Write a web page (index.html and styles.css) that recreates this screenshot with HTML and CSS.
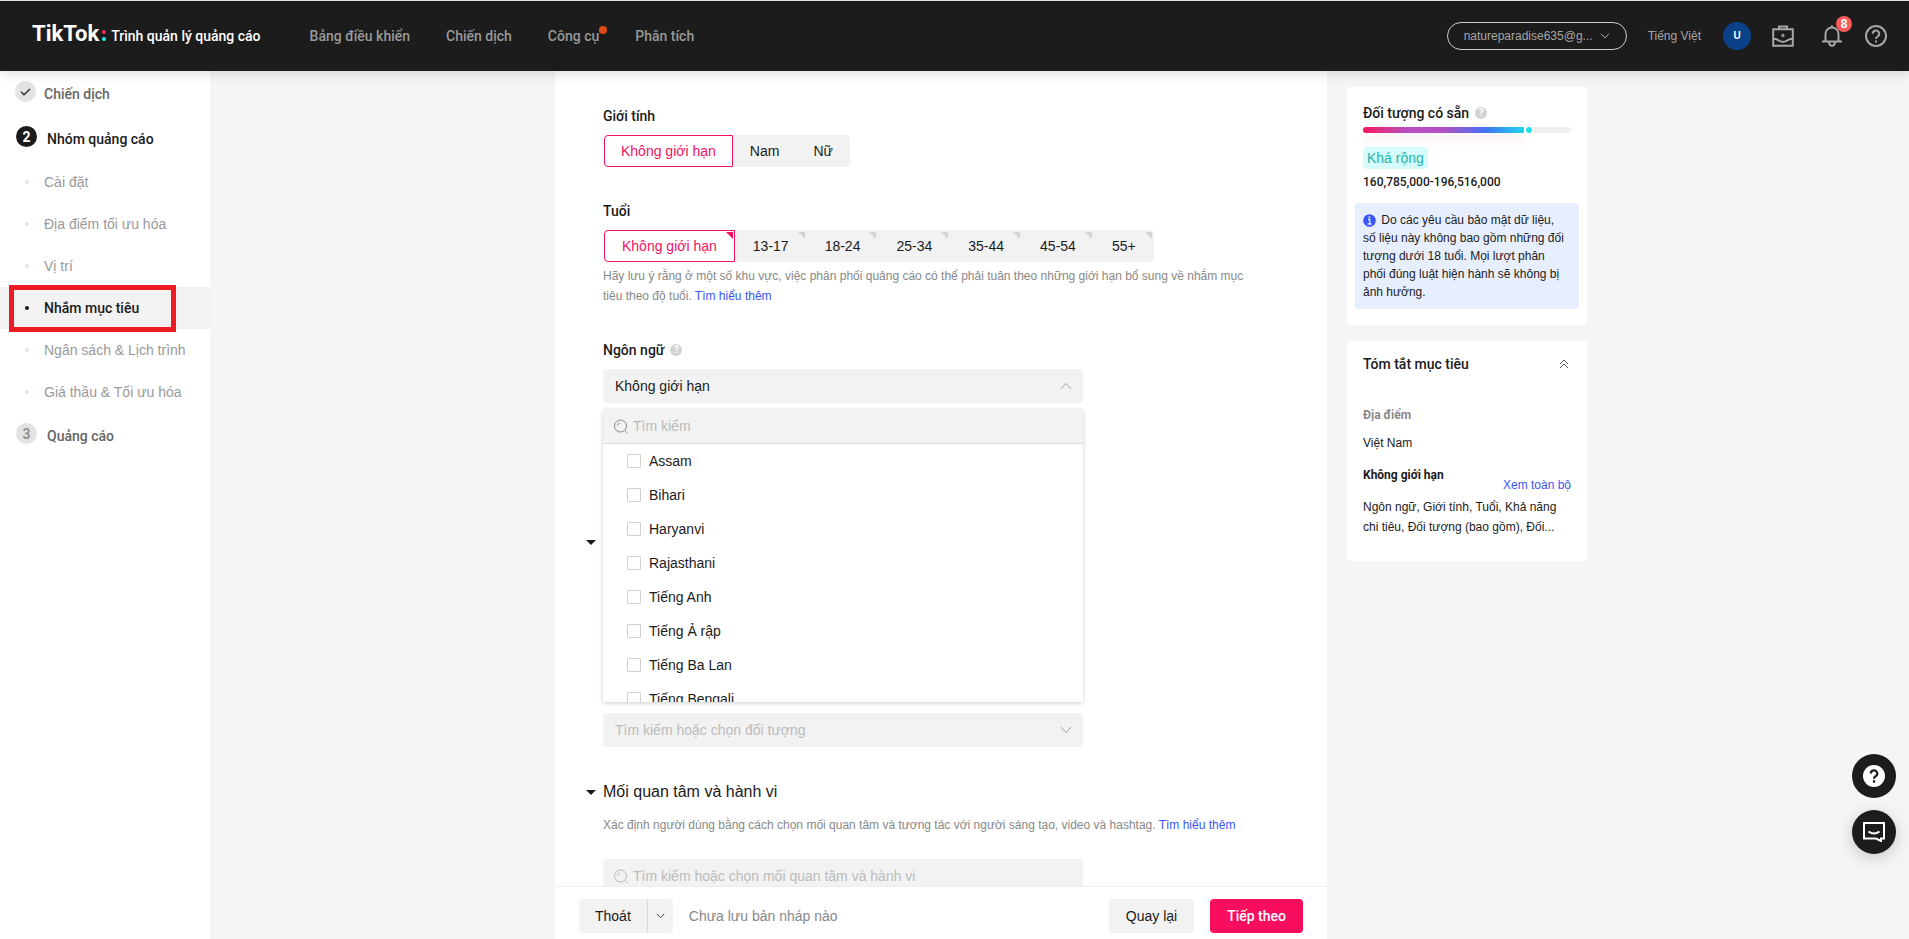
FILE: index.html
```html
<!DOCTYPE html>
<html lang="vi">
<head>
<meta charset="utf-8">
<title>Trình quản lý quảng cáo</title>
<link rel="stylesheet" href="styles.css">
</head>
<body>
<div class="app">
  <header class="topbar">
    <div class="brand">
      <span class="brand-name">TikTok</span>
      <span class="brand-colon"><i class="dot-red"></i><i class="dot-cyan"></i></span>
      <span class="brand-product">Trình quản lý quảng cáo</span>
    </div>
    <nav class="nav">
      <a href="#">Bảng điều khiển</a>
      <a href="#">Chiến dịch</a>
      <a href="#" class="has-dot">Công cụ</a>
      <a href="#">Phân tích</a>
    </nav>
    <div class="tools">
      <button class="account" type="button">natureparadise635@g...
        <svg width="10" height="6" viewBox="0 0 10 6"><path d="M1 .8 5 5 9 .8" fill="none" stroke="currentColor"/></svg>
      </button>
      <button class="lang" type="button">Tiếng Việt</button>
      <span class="avatar">U</span>
      <button class="tool tool-case" type="button" aria-label="Business Center">
        <svg width="22" height="22" viewBox="0 0 22 22" fill="none" stroke="currentColor" stroke-width="2"><path d="M7 4V1.500h8V4M1.200 4.200h19.600v16.600H1.200zM1.200 12.600 8 16.200q3 1.400 6 0l6.800-3.600"/><circle cx="11" cy="10.400" r=".6"/></svg>
      </button>
      <button class="tool tool-bell" type="button" aria-label="Thông báo">
        <svg width="22" height="22" viewBox="0 0 22 22" fill="none" stroke="currentColor" stroke-width="2"><path d="M4.500 16.500V9a6.500 6.500 0 0 1 13 0v7.500M1 16.600h20M11 .2V3M7.800 17q.4 3.800 3.200 3.800t3.200-3.800"/></svg>
        <span class="badge">8</span>
      </button>
      <button class="tool" type="button" aria-label="Trợ giúp">
        <svg width="22" height="22" viewBox="0 0 22 22" fill="none" stroke="currentColor" stroke-width="2"><circle cx="11" cy="11" r="10"/><path d="M7.800 8.800a3.200 3.200 0 1 1 4.800 2.700Q11 12.400 11 14"/><path d="M11 15.400v2"/></svg>
      </button>
    </div>
  </header>

  <div class="workspace">
    <aside class="sidebar">
      <a href="#" class="step"><span class="step-icon"><svg width="11" height="8" viewBox="0 0 11 8"><path d="m1 3.800 3 3L10 1" fill="none" stroke="#333" stroke-width="1.500"/></svg></span><span class="step-text">Chiến dịch</span></a>
      <a href="#" class="step step-numbered step-current"><span class="step-icon">2</span><span class="step-text">Nhóm quảng cáo</span></a>
      <ul class="substeps">
        <li><a href="#">Cài đặt</a></li>
        <li><a href="#">Địa điểm tối ưu hóa</a></li>
        <li><a href="#">Vị trí</a></li>
        <li class="active"><a href="#">Nhắm mục tiêu</a></li>
        <li><a href="#">Ngân sách &amp; Lịch trình</a></li>
        <li><a href="#">Giá thầu &amp; Tối ưu hóa</a></li>
      </ul>
      <a href="#" class="step step-numbered"><span class="step-icon">3</span><span class="step-text">Quảng cáo</span></a>
    </aside>

    <div class="content">
      <main class="panel">
        <div class="form">
          <fieldset class="field">
            <legend class="label">Giới tính</legend>
            <div class="segments">
              <label><input type="radio" name="gender" checked><span>Không giới hạn</span></label>
              <label><input type="radio" name="gender"><span>Nam</span></label>
              <label><input type="radio" name="gender"><span>Nữ</span></label>
            </div>
          </fieldset>
          <fieldset class="field">
            <legend class="label">Tuổi</legend>
            <div class="segments segments-corner">
              <label><input type="radio" name="age" checked><span>Không giới hạn</span></label>
              <label><input type="radio" name="age"><span>13-17</span></label>
              <label><input type="radio" name="age"><span>18-24</span></label>
              <label><input type="radio" name="age"><span>25-34</span></label>
              <label><input type="radio" name="age"><span>35-44</span></label>
              <label><input type="radio" name="age"><span>45-54</span></label>
              <label><input type="radio" name="age"><span>55+</span></label>
            </div>
            <p class="note">Hãy lưu ý rằng ở một số khu vực, việc phân phối quảng cáo có thể phải tuân theo những giới hạn bổ sung về nhắm mục tiêu theo độ tuổi. <a href="#">Tìm hiểu thêm</a></p>
          </fieldset>
          <div class="field">
            <label class="label" for="language">Ngôn ngữ <span class="hint">?</span></label>
            <div class="picker">
              <select id="language"><option>Không giới hạn</option></select>
              <svg class="arrow" width="12" height="8" viewBox="0 0 12 8"><path d="M1 6.800 6 1.500l5 5.300" fill="none" stroke="#999"/></svg>
              <div class="menu">
                <div class="search">
                  <svg width="14" height="15" viewBox="0 0 14 15" fill="none" stroke="#888"><circle cx="6.500" cy="7" r="6"/><path d="M10.800 11.200 13.500 14.300M3.500 6.500a3.500 3.500 0 0 1 2.500-2.600"/></svg>
                  <input type="text" placeholder="Tìm kiếm" aria-label="Tìm kiếm">
                </div>
                <div class="options">
                  <label><input type="checkbox">Assam</label>
                  <label><input type="checkbox">Bihari</label>
                  <label><input type="checkbox">Haryanvi</label>
                  <label><input type="checkbox">Rajasthani</label>
                  <label><input type="checkbox">Tiếng Anh</label>
                  <label><input type="checkbox">Tiếng Ả rập</label>
                  <label><input type="checkbox">Tiếng Ba Lan</label>
                  <label><input type="checkbox">Tiếng Bengali</label>
                </div>
              </div>
            </div>
          </div>
          <section class="group group-audience">
            <button class="toggle" type="button" aria-label="Thu gọn"></button>
            <div class="picker">
              <select class="empty" aria-label="Đối tượng"><option>Tìm kiếm hoặc chọn đối tượng</option></select>
              <svg class="arrow" width="12" height="8" viewBox="0 0 12 8"><path d="M1 1.200 6 6.500l5-5.300" fill="none" stroke="#999"/></svg>
            </div>
          </section>
          <section class="group">
            <button class="toggle" type="button">Mối quan tâm và hành vi</button>
            <p class="note">Xác định người dùng bằng cách chọn mối quan tâm và tương tác với người sáng tạo, video và hashtag. <a href="#">Tìm hiểu thêm</a></p>
            <div class="search search-field">
              <svg width="14" height="15" viewBox="0 0 14 15" fill="none" stroke="#bbb"><circle cx="6.500" cy="7" r="6"/><path d="M10.800 11.200 13.500 14.300M3.500 6.500a3.500 3.500 0 0 1 2.500-2.600"/></svg>
              <input type="text" placeholder="Tìm kiếm hoặc chọn mối quan tâm và hành vi" aria-label="Mối quan tâm và hành vi">
            </div>
          </section>
        </div>
        <footer class="actions">
          <div class="split">
            <button type="button">Thoát</button>
            <button type="button" class="split-more" aria-label="Thêm"><svg width="9" height="6" viewBox="0 0 9 6"><path d="m.8.800 3.700 4 3.700-4" fill="none" stroke="#444"/></svg></button>
          </div>
          <span class="status">Chưa lưu bản nháp nào</span>
          <button type="button" class="btn">Quay lại</button>
          <button type="button" class="btn btn-primary">Tiếp theo</button>
        </footer>
      </main>

      <aside class="insights">
        <section class="card card-audience">
          <h2 class="card-title">Đối tượng có sẵn <span class="hint">?</span></h2>
          <div class="meter"><div class="meter-fill"></div><i class="meter-knob"></i><div class="meter-rest"></div></div>
          <span class="tag">Khá rộng</span>
          <div class="range">160,785,000-196,516,000</div>
          <p class="info"><svg width="13" height="13" viewBox="0 0 13 13"><circle cx="6.500" cy="6.500" r="6.300" fill="#3a56f6"/><path d="M5 5.500h1.800V10M4.600 10h4" fill="none" stroke="#dfe6ff" stroke-width="1.300"/><circle cx="6.400" cy="3.300" r="1" fill="#dfe6ff"/></svg> Do các yêu cầu bảo mật dữ liệu, số&nbsp;liệu này không bao gồm những đối tượng dưới 18 tuổi. Mọi lượt phân phối&nbsp;đúng luật hiện hành sẽ không bị ảnh hưởng.</p>
        </section>
        <section class="card card-summary">
          <div class="card-head">
            <h2 class="card-title">Tóm tắt mục tiêu</h2>
            <button type="button" class="fold" aria-label="Thu gọn"><svg width="10" height="10" viewBox="0 0 10 10"><path d="m1 5 4-4 4 4M1 9l4-4 4 4" fill="none" stroke="#555"/></svg></button>
          </div>
          <h3 class="muted">Địa điểm</h3>
          <p class="place">Việt Nam</p>
          <h3>Không giới hạn</h3>
          <a href="#" class="see-all">Xem toàn bộ</a>
          <p class="list">Ngôn ngữ, Giới tính, Tuổi, Khả năng chi tiêu, Đối tượng (bao gồm), Đối...</p>
        </section>
      </aside>
    </div>
  </div>

  <div class="floating">
    <button type="button" aria-label="Trợ giúp"><svg width="22" height="22" viewBox="0 0 22 22"><circle cx="11" cy="11" r="11" fill="#fff"/><path d="M7.800 8.600a3.200 3.200 0 1 1 4.800 2.700Q11 12.300 11 13.800M11 15.300v2.400" fill="none" stroke="#1c1c1c" stroke-width="2.200"/></svg></button>
    <button type="button" class="chat" aria-label="Trò chuyện"><svg width="22" height="20" viewBox="0 0 22 20" fill="none" stroke="#fff" stroke-width="2"><path d="M1 1h20v15.500h-3V19l-5-2.500H1z"/><path d="M5.500 9.500q5.500 4 11 0"/></svg></button>
  </div>
  <div class="highlight"></div>
</div>
</body>
</html>
```

FILE: styles.css
```css
* { box-sizing: border-box; }

body {
  margin: 0;
  font: 14px/20px "Liberation Sans", Arial, sans-serif;
  color: #1b1b1b;
  background: #f5f5f5;
}

button, input, select { font: inherit; color: inherit; }
button { border: 0; padding: 0; background: none; cursor: pointer; }
a { color: #3955f6; text-decoration: none; }
h2, h3, p, ul, fieldset { margin: 0; padding: 0; border: 0; }
ul { list-style: none; }
svg { flex: none; }

/* Medium and bold text */
.brand, .nav, .step, .label, .range, .btn-primary, .card h2, .card h3, .substeps .active {
  font-family: Roboto, "Liberation Sans", sans-serif;
}

.app {
  position: relative;
  display: flex;
  flex-direction: column;
  height: 100vh;
  overflow: hidden;
}

/* Top bar */
.topbar {
  position: relative;
  z-index: 2;
  flex: none;
  display: flex;
  align-items: center;
  height: 71px;
  padding: 0 22px 0 32px;
  background: #1c1c1c;
  border-top: 1px solid #dde3e1;
  box-shadow: 0 2px 12px rgba(0, 0, 0, .15);
}
.brand { display: flex; align-items: center; color: #fff; font-weight: 500; }
.brand-name { font-size: 22px; font-weight: 700; line-height: 26px; padding-bottom: 4px; }
.brand-colon { display: flex; flex-direction: column; gap: 3px; padding: 0 5px 2px 3px; }
.brand-colon i { width: 4px; height: 4px; border-radius: 50%; }
.dot-red { background: #fe2c55; }
.dot-cyan { background: #25f4ee; }
.nav { display: flex; gap: 36px; margin-left: 49px; }
.nav a { position: relative; color: #999; font-weight: 500; }
.has-dot::after {
  content: "";
  position: absolute;
  top: 0;
  right: -8px;
  width: 8px;
  height: 8px;
  border-radius: 50%;
  background: #dd4a14;
}
.tools { display: flex; align-items: center; margin-left: auto; color: #a6a6a6; font-size: 12px; }
.account {
  display: flex;
  align-items: center;
  justify-content: space-between;
  width: 180px;
  height: 28px;
  padding: 0 16px;
  border: 1px solid #ccc;
  border-radius: 14px;
}
.lang { margin-left: 21px; }
.avatar {
  width: 28px;
  margin-left: 22px;
  border-radius: 50%;
  background: #0b4186;
  color: #fff;
  font-size: 10px;
  font-weight: 700;
  line-height: 28px;
  text-align: center;
}
.tool { position: relative; display: flex; }
.tool-case { margin-left: 21px; }
.tool-bell { margin: 0 22px 0 27px; }
.badge {
  position: absolute;
  top: -9px;
  right: -9px;
  width: 16px;
  border-radius: 8px;
  background: #fa5c5c;
  color: #fff;
  font-weight: 700;
  line-height: 16px;
  text-align: center;
}

/* Body */
.workspace { flex: 1; display: flex; min-height: 0; }

.sidebar { flex: none; width: 210px; padding-top: 10px; background: #fff; }
.step { display: flex; gap: 8px; padding-left: 15px; color: #666; font-weight: 500; }
.step-numbered { gap: 10px; padding-left: 16px; }
.step-icon {
  display: flex;
  align-items: center;
  justify-content: center;
  width: 21px;
  height: 21px;
  border-radius: 50%;
  background: #e3e3e3;
  color: #888;
}
.step-text { padding-top: 3px; }
.step-current { margin-top: 22px; color: #1b1b1b; }
.step-current .step-icon { background: #1b1b1b; color: #fff; font-weight: 700; }
.substeps { padding: 12px 0 10px; }
.substeps a {
  display: flex;
  align-items: center;
  gap: 15px;
  height: 42px;
  padding-left: 25px;
  color: #999;
}
.substeps a::before { content: ""; width: 4px; height: 4px; border-radius: 50%; background: #e5e5e5; }
.substeps .active { background: #f2f2f2; }
.substeps .active a { color: #1b1b1b; font-weight: 500; }
.substeps .active a::before { background: #1b1b1b; }

.highlight {
  position: absolute;
  z-index: 3;
  top: 285px;
  left: 9px;
  width: 167px;
  height: 47px;
  border: 5px solid #ed1c24;
  pointer-events: none;
}

.content { flex: 1; display: flex; justify-content: center; gap: 20px; padding-left: 23px; min-width: 0; }

/* Form */
.panel { flex: 0 1 772px; display: flex; flex-direction: column; background: #fff; min-width: 0; }
.form { flex: 1; min-height: 0; padding: 35px 48px 0; overflow: hidden; }
.field { margin-bottom: 34px; min-width: 0; }
.label { display: flex; align-items: center; gap: 6px; padding: 0; margin-bottom: 9px; font-weight: 500; }
.hint {
  width: 12px;
  height: 12px;
  border-radius: 50%;
  background: #d3d3d3;
  color: #fff;
  font-size: 10px;
  font-weight: 700;
  line-height: 12px;
  text-align: center;
}
.segments { display: inline-flex; margin-left: 1px; vertical-align: top; border-radius: 4px; background: #f2f2f2; }
.segments label { position: relative; }
.segments input { position: absolute; opacity: 0; margin: 0; }
.segments span { display: block; padding: 5px 16px; border: 1px solid transparent; }
.segments input:checked + span {
  border-color: #f5125f;
  border-radius: 4px 0 0 4px;
  background: #fff;
  color: #f5125f;
}
.segments-corner span { padding: 5px 17px; }
.segments-corner label::after {
  content: "";
  position: absolute;
  top: 2px;
  right: 2px;
  border-top: 7px solid #d3d3d3;
  border-left: 7px solid transparent;
}
.segments-corner label:first-child::after { border-top-color: #f5125f; }
.note { max-width: 660px; margin-top: 4px; color: #888; font-size: 12px; }

.picker { position: relative; width: 480px; max-width: 100%; }
select {
  display: block;
  width: 100%;
  height: 34px;
  padding: 0 12px;
  border: 0;
  border-radius: 4px;
  background: #f2f2f2;
  appearance: none;
}
select.empty { color: #bbb; }
.arrow { position: absolute; top: 13px; right: 11px; }
.menu {
  position: absolute;
  z-index: 1;
  top: 40px;
  left: 0;
  right: 0;
  background: #fff;
  border-radius: 4px 4px 0 0;
  box-shadow: 0 1px 4px rgba(0, 0, 0, .2);
  overflow: hidden;
}
.search { display: flex; align-items: center; gap: 5px; height: 35px; padding: 0 11px; background: #f2f2f2; }
.menu .search { border-bottom: 1px solid #ddd; }
.search input { flex: 1; min-width: 0; padding: 0; border: 0; background: none; outline: 0; }
.search input::placeholder { color: #bbb; }
.options { height: 258px; overflow: hidden; }
.options label { display: flex; align-items: center; gap: 8px; height: 34px; padding-left: 24px; }
.options input { width: 14px; height: 14px; margin: 0; border: 1px solid #d0d0d0; border-radius: 1px; background: #fff; appearance: none; }

.group { margin-bottom: 33px; }
.group-audience { margin-top: 127px; }
.group-audience .picker { margin-top: 159px; }
.toggle {
  display: flex;
  align-items: center;
  gap: 7px;
  height: 24px;
  margin-left: -17px;
  font-size: 16px;
}
.toggle::before { content: ""; border: 5px solid transparent; border-top-color: #1b1b1b; border-bottom: 0; }
.group .note { margin: 11px 0 24px; }
.search-field { width: 480px; max-width: 100%; height: 34px; border-radius: 4px; }

.actions {
  flex: none;
  display: flex;
  align-items: center;
  gap: 16px;
  padding: 12px 24px 6px;
  border-top: 1px solid #eee;
}
.split { display: flex; height: 34px; border-radius: 4px; background: #f2f2f2; }
.split button { padding: 0 16px; }
.split .split-more { display: flex; align-items: center; padding: 0 8px; border-left: 1px solid #ddd; }
.status { margin-right: auto; color: #888; }
.btn { height: 34px; padding: 0 17px; border-radius: 4px; background: #f2f2f2; }
.btn-primary { background: #f80d5f; color: #fff; font-weight: 500; }

/* Right column */
.insights { flex: none; display: flex; flex-direction: column; gap: 16px; width: 240px; padding-top: 16px; }
.card { padding: 16px; background: #fff; border-radius: 4px; }
.card-title { display: flex; align-items: center; gap: 6px; font-size: 14px; font-weight: 500; line-height: 20px; }
.meter { display: flex; align-items: center; margin: 3px 0 13px; height: 8px; }
.meter-fill {
  flex: 0 0 161px;
  height: 6px;
  border-radius: 3px 0 0 3px;
  background: linear-gradient(90deg, #f8175f 0%, #b84fc0 28%, #b44fc4 50%, #3f73f5 76%, #20d5ec 100%);
  box-shadow: 0 8px 8px rgba(220, 130, 200, .15);
}
.meter-knob { width: 6px; height: 6px; margin: 0 1px 0 2px; border-radius: 50%; background: #1fe0ea; }
.meter-rest { flex: 1; height: 6px; border-radius: 0 3px 3px 0; background: #f0f0f0; }
.tag { display: inline-block; padding: 1px 4px; border-radius: 4px; background: #d5fbfb; color: #1fb5ab; }
.range { margin-top: 3px; font-size: 12px; font-weight: 500; }
.info { margin: 11px -8px 0; padding: 8px 4px 8px 8px; border-radius: 4px; background: #e7efff; font-size: 12px; line-height: 18px; }
.info svg { vertical-align: -3px; margin-right: 2px; }
.card-summary { padding: 13px 16px 24px; font-size: 12px; }
.card-head { display: flex; justify-content: space-between; align-items: center; margin-bottom: 31px; }
.fold { display: flex; margin-right: 2px; }
.card h3 { font-size: 12px; font-weight: 700; line-height: 20px; }
.card .muted { color: #888; }
.place { margin: 8px 0 12px; }
.see-all { display: block; margin-top: -10px; text-align: right; }
.list { margin-top: 2px; }

/* Floating buttons */
.floating { position: absolute; z-index: 3; right: 13px; bottom: 85px; display: flex; flex-direction: column; gap: 12px; }
.floating button {
  display: flex;
  align-items: center;
  justify-content: center;
  width: 44px;
  height: 44px;
  border-radius: 50%;
  background: #1c1c1c;
}
.floating .chat { box-shadow: 0 4px 16px rgba(0, 0, 0, .18); }
```
